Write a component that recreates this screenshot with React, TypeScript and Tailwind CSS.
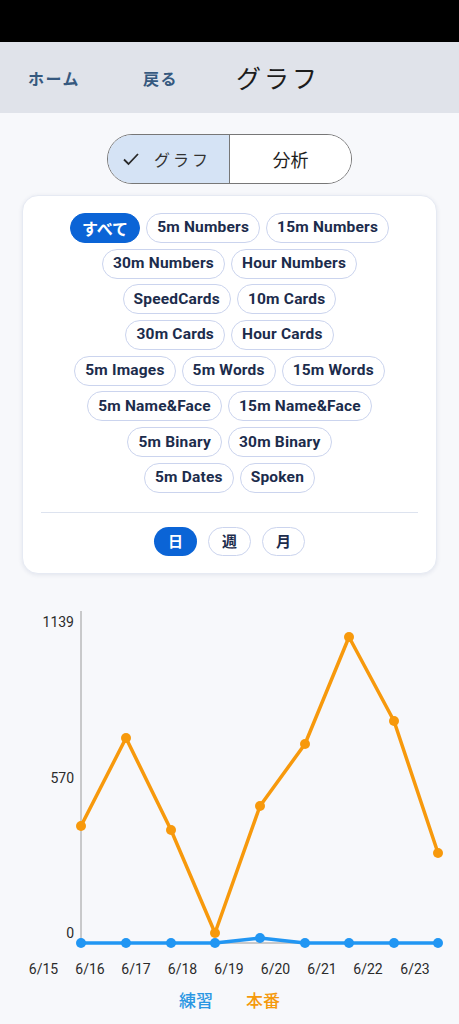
import React from "react";

const rows: string[][] = [
  ["すべて", "5m Numbers", "15m Numbers"],
  ["30m Numbers", "Hour Numbers"],
  ["SpeedCards", "10m Cards"],
  ["30m Cards", "Hour Cards"],
  ["5m Images", "5m Words", "15m Words"],
  ["5m Name&Face", "15m Name&Face"],
  ["5m Binary", "30m Binary"],
  ["5m Dates", "Spoken"],
];

const xs = [81, 126, 171, 215, 260, 305, 349, 394, 438];
const orange = [825, 737, 829, 932, 805, 743, 636, 720, 852];
const blue = [942, 942, 942, 942, 937, 942, 942, 942, 942];
const xLabels = [
  [43.5, "6/15"],
  [90, "6/16"],
  [136, "6/17"],
  [182.5, "6/18"],
  [229, "6/19"],
  [275.5, "6/20"],
  [322, "6/21"],
  [368, "6/22"],
  [415, "6/23"],
] as const;

const ORANGE = "#F7990C";
const BLUE = "#2196F3";

function Chart() {
  const op = xs.map((x, i) => `${x},${orange[i]}`).join(" ");
  const bp = xs.map((x, i) => `${x},${blue[i]}`).join(" ");
  return (
    <svg width={459} height={385} viewBox="0 600 459 385" className="block">
      <line x1={81} y1={610} x2={81} y2={942} stroke="#9a9a9a" strokeWidth={1} />
      <line x1={81} y1={942} x2={438} y2={942} stroke="#9a9a9a" strokeWidth={1} />
      <g fontFamily="Roboto, 'Noto Sans', sans-serif" fontSize={14} fill="#2b2b2b">
        <text x={74} y={626} textAnchor="end">1139</text>
        <text x={74} y={782} textAnchor="end">570</text>
        <text x={74} y={937} textAnchor="end">0</text>
        {xLabels.map(([x, t]) => (
          <text key={t} x={x} y={973} textAnchor="middle">{t}</text>
        ))}
      </g>
      <polyline points={op} fill="none" stroke={ORANGE} strokeWidth={3.5} strokeLinejoin="round" />
      {xs.map((x, i) => (
        <circle key={"o" + i} cx={x} cy={orange[i]} r={5} fill={ORANGE} />
      ))}
      <polyline points={bp} fill="none" stroke={BLUE} strokeWidth={3.5} strokeLinejoin="round" />
      {xs.map((x, i) => (
        <circle key={"b" + i} cx={x} cy={blue[i]} r={5} fill={BLUE} />
      ))}
    </svg>
  );
}

export default function App() {
  return (
    <div
      className="w-[459px] h-[1024px] overflow-hidden bg-[#f7f8fb]"
      style={{ fontFamily: "Roboto, 'Noto Sans CJK JP', sans-serif" }}
    >
      <div className="h-[42px] bg-black" />
      <header className="h-[71px] bg-[#e0e3ea] flex items-center pl-[28px]">
        <span className="text-[16px] font-bold text-[#36597f] tracking-[1.5px] font-['Noto_Sans_CJK_JP',sans-serif]">
          ホーム
        </span>
        <span className="ml-[63px] text-[16px] font-bold text-[#36597f] tracking-[1.5px] font-['Noto_Sans_CJK_JP',sans-serif]">
          戻る
        </span>
        <span className="ml-[58px] text-[25px] text-[#1c1c1c] tracking-[3px] font-['Noto_Sans_CJK_JP',sans-serif]">
          グラフ
        </span>
      </header>

      <div className="flex justify-center mt-[21px]">
        <div className="flex w-[245px] h-[50px] rounded-full border border-[#777] overflow-hidden font-['Noto_Sans_CJK_JP',sans-serif]">
          <div className="w-[122px] bg-[#d5e3f5] border-r border-[#777] flex items-center justify-center gap-[14px] pr-[4px]">
            <svg width="18" height="14" viewBox="0 0 18 14" fill="none">
              <path d="M2 7.5 L6.5 12 L16 2" stroke="#2a2a2a" strokeWidth="1.8" />
            </svg>
            <span className="text-[16px] text-[#333] tracking-[3px]">グラフ</span>
          </div>
          <div className="flex-1 bg-white flex items-center justify-center">
            <span className="text-[18px] text-[#1e1e1e]">分析</span>
          </div>
        </div>
      </div>

      <div className="mx-[22px] mt-[11px] bg-white rounded-[16px] border border-[#e6eaf3] shadow-[0_1px_4px_rgba(40,60,110,0.10)] pt-[17px] pb-[17px]">
        <div className="flex flex-col items-center gap-[5.7px]">
          {rows.map((r, ri) => (
            <div key={ri} className="flex gap-[6px]">
              {r.map((c) =>
                c === "すべて" ? (
                  <div
                    key={c}
                    className="h-[30px] px-[11px] rounded-full bg-[#0b64d6] border border-[#0b64d6] text-white text-[16px] font-bold flex items-center font-['Noto_Sans_CJK_JP',sans-serif]"
                  >
                    {c}
                  </div>
                ) : (
                  <div
                    key={c}
                    className="h-[30px] px-[10px] rounded-full border border-[#cbd4ee] bg-white text-[#1c2c4c] text-[15.5px] font-bold flex items-center tracking-[0.2px] font-['Roboto',sans-serif]"
                  >
                    {c}
                  </div>
                )
              )}
            </div>
          ))}
        </div>
        <div className="mx-[18px] mt-[19px] border-t border-[#dde3ef]" />
        <div className="flex justify-center gap-[11px] mt-[14px] font-['Noto_Sans_CJK_JP',sans-serif]">
          <div className="w-[43px] h-[29px] rounded-full bg-[#0b64d6] text-white text-[15px] font-bold flex items-center justify-center">
            日
          </div>
          <div className="w-[43px] h-[29px] rounded-full border border-[#cbd4ee] text-[#1c2c4c] text-[15px] font-bold flex items-center justify-center">
            週
          </div>
          <div className="w-[43px] h-[29px] rounded-full border border-[#cbd4ee] text-[#1c2c4c] text-[15px] font-bold flex items-center justify-center">
            月
          </div>
        </div>
      </div>

      <div className="mt-[27px]">
        <Chart />
      </div>
      <div className="flex justify-center gap-[33px] mt-[1px] font-['Noto_Sans_CJK_JP',sans-serif] text-[17px] font-medium">
        <span className="text-[#2b97e3]">練習</span>
        <span className="text-[#f5990c]">本番</span>
      </div>
    </div>
  );
}
